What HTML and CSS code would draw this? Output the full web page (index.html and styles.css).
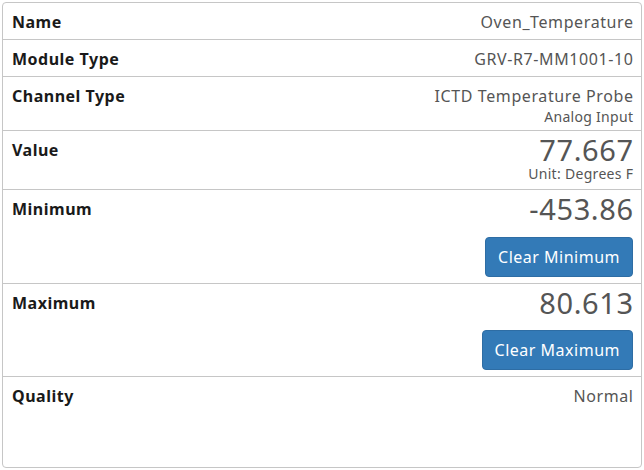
FILE: index.html
```html
<!DOCTYPE html>
<html>
<head>
<meta charset="utf-8">
<link rel="stylesheet" href="styles.css">
</head>
<body>
<div class="card">
  <div class="row">
    <div class="label">Name</div>
    <div class="val"><div class="text">Oven_Temperature</div></div>
  </div>
  <div class="row">
    <div class="label">Module Type</div>
    <div class="val"><div class="text">GRV-R7-MM1001-10</div></div>
  </div>
  <div class="row tworow">
    <div class="label">Channel Type</div>
    <div class="val"><div class="text">ICTD Temperature Probe</div><div class="small">Analog Input</div></div>
  </div>
  <div class="row valrow">
    <div class="label">Value</div>
    <div class="val"><div class="big">77.667</div><div class="small unit">Unit: Degrees F</div></div>
  </div>
  <div class="row btnrow">
    <div class="label">Minimum</div>
    <div class="val"><div class="big">-453.86</div><button class="btn">Clear Minimum</button></div>
  </div>
  <div class="row btnrow maxrow">
    <div class="label">Maximum</div>
    <div class="val"><div class="big">80.613</div><button class="btn">Clear Maximum</button></div>
  </div>
  <div class="row last">
    <div class="label">Quality</div>
    <div class="val"><div class="text">Normal</div></div>
  </div>
</div>
</body>
</html>
```
FILE: styles.css
```css
html, body {
  margin: 0;
  padding: 0;
  background: #ffffff;
}
body {
  padding: 2px;
  font-family: "Noto Sans", "Open Sans", sans-serif;
  color: #222;
}
.card {
  border: 1px solid #c6c6c6;
  border-radius: 4px;
  height: 466px;
  box-sizing: border-box;
  display: flex;
  flex-direction: column;
  background: #fff;
}
.row {
  display: flex;
  justify-content: space-between;
  align-items: flex-start;
  padding: 9px 8px 7px 9px;
  border-top: 1px solid #c6c6c6;
}
.row:first-child {
  border-top: none;
}
.row.tworow {
  padding-bottom: 5px;
}
.row.valrow {
  padding-bottom: 7px;
}
.row.btnrow {
  padding-bottom: 6px;
}
.row.last {
  flex: 1;
}
.label {
  font-weight: 700;
  font-size: 16px;
  letter-spacing: 0.5px;
  line-height: 20px;
  color: #1a1a1a;
}
.val {
  display: flex;
  flex-direction: column;
  align-items: flex-end;
  color: #555;
}
.text {
  font-size: 16px;
  letter-spacing: 0.6px;
  line-height: 20px;
  margin-right: -0.6px;
}
.small {
  font-size: 14px;
  letter-spacing: 0.3px;
  line-height: 16px;
  margin-top: 3px;
  margin-right: -0.3px;
}
.big {
  font-size: 29px;
  letter-spacing: 0.6px;
  line-height: 26px;
  margin-top: -3px;
  margin-right: -0.6px;
}
.btn {
  margin-top: 15px;
  background: #337ab7;
  border: 1px solid #2e6da4;
  border-radius: 4px;
  color: #fff;
  font-family: inherit;
  font-size: 16px;
  letter-spacing: 0.5px;
  height: 40px;
  padding: 0 12px;
}
.maxrow .btn {
  margin-top: 14px;
}
```
